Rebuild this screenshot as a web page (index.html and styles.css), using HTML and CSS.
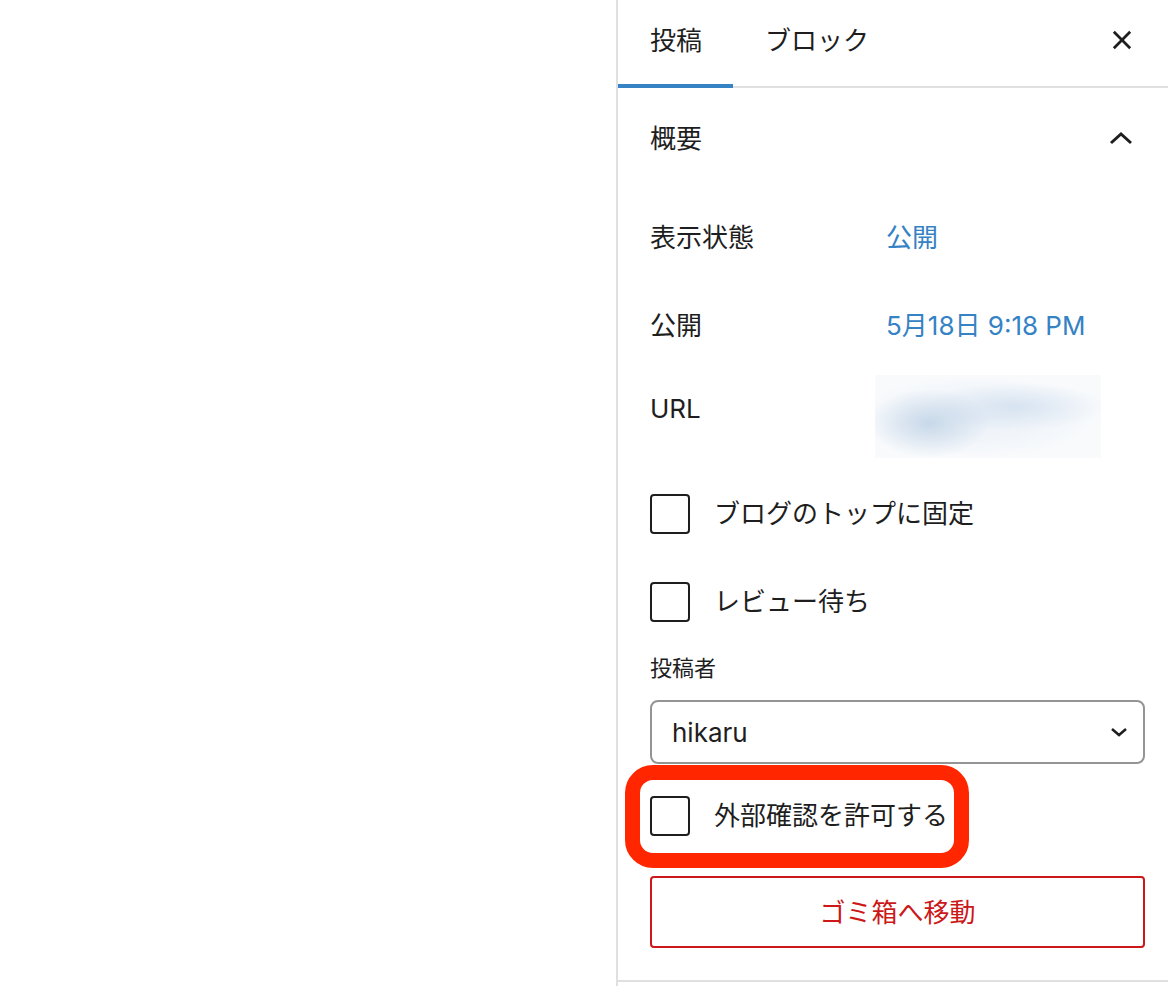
FILE: index.html
```html
<!DOCTYPE html>
<html lang="ja">
<head>
<meta charset="utf-8">
<title>投稿設定</title>
<link rel="stylesheet" href="styles.css">
</head>
<body>
<div class="page">
  <div class="canvas"></div>
  <aside class="sidebar">
    <div class="tabs">
      <div class="tab active">投稿</div>
      <div class="tab">ブロック</div>
      <div class="tab-spacer"></div>
      <button class="close" aria-label="閉じる">
        <svg width="22" height="22" viewBox="0 0 22 22"><path d="M2 2 L20 20 M20 2 L2 20" stroke="#1e1e1e" stroke-width="3" fill="none"/></svg>
      </button>
    </div>
    <div class="panel">
      <div class="panel-header">
        <span>概要</span>
        <svg class="chev-up" width="24" height="14" viewBox="0 0 24 14"><path d="M2 12 L12 3 L22 12" stroke="#1e1e1e" stroke-width="3" fill="none"/></svg>
      </div>
      <div class="panel-body">
        <div class="row row-vis">
          <span class="label">表示状態</span>
          <span class="value">公開</span>
        </div>
        <div class="row row-pub">
          <span class="label">公開</span>
          <span class="value">5月18日 9:18 PM</span>
        </div>
        <div class="row row-url">
          <span class="label">URL</span>
          <div class="blur"></div>
        </div>
        <label class="check-row">
          <span class="box"></span>
          <span>ブログのトップに固定</span>
        </label>
        <label class="check-row">
          <span class="box"></span>
          <span>レビュー待ち</span>
        </label>
        <div class="author-label">投稿者</div>
        <div class="select">
          <span>hikaru</span>
          <svg width="18" height="10" viewBox="0 0 18 10"><path d="M2 2 L9 8 L16 2" stroke="#1e1e1e" stroke-width="2.5" fill="none"/></svg>
        </div>
        <label class="check-row highlighted">
          <span class="box"></span>
          <span>外部確認を許可する</span>
          <span class="mark"></span>
        </label>
        <button class="trash">ゴミ箱へ移動</button>
      </div>
    </div>
  </aside>
</div>
</body>
</html>
```

FILE: styles.css
```css
* { box-sizing: border-box; }

html, body {
  margin: 0;
  padding: 0;
  background: #ffffff;
}

body {
  font-family: "Inter", "Noto Sans CJK JP", sans-serif;
  font-size: 26px;
  color: #1e1e1e;
}

.page {
  display: flex;
  height: 986px;
  overflow: hidden;
}

.canvas {
  width: 616px;
  flex: none;
}

.sidebar {
  flex: 1;
  border-left: 2px solid #e0e0e0;
  display: flex;
  flex-direction: column;
}

.tabs {
  display: flex;
  align-items: stretch;
  height: 88px;
  border-bottom: 2px solid #e0e0e0;
}

.tab {
  display: flex;
  align-items: center;
  padding: 0 32px 6px 32px;
  height: 88px;
  margin-bottom: -2px;
  line-height: 1;
}

.tab.active {
  box-shadow: inset 0 -4px 0 #3582c4;
  padding-right: 31px;
}

.tab-spacer { flex: 1; }

.close {
  border: 0;
  background: none;
  padding: 0;
  width: 60px;
  margin-right: 16px;
  display: flex;
  align-items: center;
  justify-content: center;
  padding-bottom: 6px;
}

.close svg { width: 20px; height: 20px; }

.panel {
  border-bottom: 2px solid #e0e0e0;
}

.panel-header {
  height: 102px;
  display: flex;
  align-items: center;
  justify-content: space-between;
  padding: 0 35px 0 32px;
  line-height: 1;
}

.chev-up { margin-top: -2px; }

.panel-body {
  padding: 0 23px 32px 32px;
  display: flex;
  flex-direction: column;
}

.row {
  display: flex;
  align-items: center;
  line-height: 36px;
}

.label {
  width: 236px;
  flex: none;
}

.value {
  color: #3582c4;
}

.row-vis { height: 96px; }
.row-pub { height: 80px; }

.row-url {
  height: 92px;
  align-items: flex-start;
}

.row-url .label { margin-top: 25px; }

.blur {
  margin-top: 9px;
  margin-left: -11px;
  width: 226px;
  height: 83px;
  background:
    radial-gradient(ellipse 60px 34px at 24% 58%, rgba(190, 209, 229, 0.8), rgba(190, 209, 229, 0) 100%),
    radial-gradient(ellipse 90px 24px at 62% 38%, rgba(208, 222, 238, 0.75), rgba(208, 222, 238, 0) 100%),
    radial-gradient(ellipse 120px 40px at 45% 50%, rgba(222, 232, 243, 0.6), rgba(222, 232, 243, 0) 100%),
    #f8fafc;
}

.check-row {
  display: flex;
  align-items: center;
  gap: 24px;
  height: 88px;
  line-height: 36px;
}

.check-row:first-of-type { margin-top: 12px; }

.box {
  width: 40px;
  height: 40px;
  border: 2px solid #1e1e1e;
  border-radius: 4px;
  flex: none;
}

.author-label {
  font-size: 22px;
  line-height: 30px;
  margin-top: 7px;
}

.select {
  margin-top: 17px;
  height: 64px;
  border: 2px solid #949494;
  border-radius: 8px;
  display: flex;
  align-items: center;
  justify-content: space-between;
  padding: 0 15px 0 20px;
}

.highlighted {
  position: relative;
  margin-top: 8px;
}

.mark {
  position: absolute;
  left: -25px;
  top: -7px;
  width: 344px;
  height: 103px;
  border: 15px solid #ff2600;
  border-radius: 28px;
  pointer-events: none;
}

.trash {
  margin-top: 16px;
  height: 72px;
  border: 2px solid #cc1818;
  border-radius: 4px;
  background: #ffffff;
  color: #cc1818;
  font-family: "Inter", "Noto Sans CJK JP", sans-serif;
  font-size: 26px;
  padding: 0 0 4px 0;
}
```
